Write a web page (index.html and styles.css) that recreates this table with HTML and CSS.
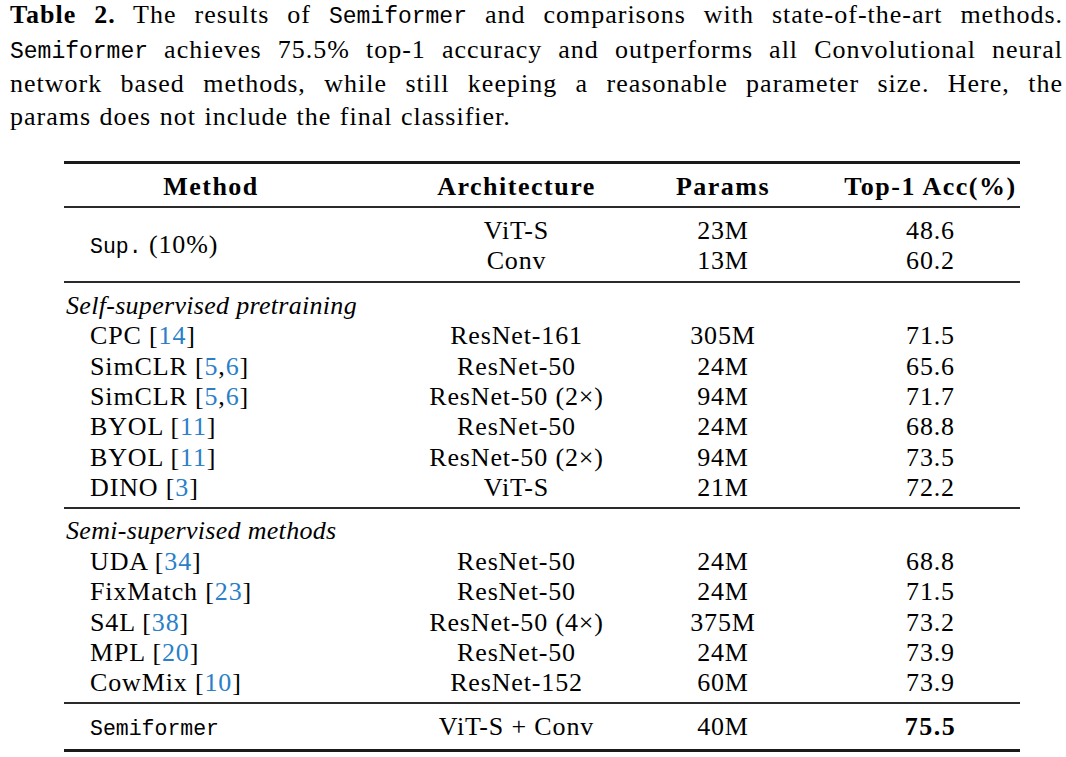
FILE: index.html
```html
<!DOCTYPE html>
<html>
<head>
<meta charset="utf-8">
<link rel="stylesheet" href="styles.css">
</head>
<body>
<div class="caption">
  <span class="cl"><b class="lbl">Table 2.</b> The results of <span class="tt">Semiformer</span> and comparisons with state-of-the-art methods.</span>
  <span class="cl"><span class="tt">Semiformer</span> achieves 75.5% top-1 accuracy and outperforms all Convolutional neural</span>
  <span class="cl">network based methods, while still keeping a reasonable parameter size. Here, the</span>
  <span class="cl last">params does not include the final classifier.</span>
</div>

<div class="tbl">
  <div class="rule thick"></div>
  <div class="grid head">
    <div class="c1">Method</div>
    <div class="c2">Architecture</div>
    <div class="c3">Params</div>
    <div class="c4">Top-1 Acc(%)</div>
  </div>
  <div class="rule"></div>
  <div class="grid g-sup">
    <div class="c1 m span2"><span class="tt2">Sup.</span> (10%)</div>
    <div class="c2">ViT-S</div><div class="c3">23M</div><div class="c4">48.6</div>
    <div class="c2">Conv</div><div class="c3">13M</div><div class="c4">60.2</div>
  </div>
  <div class="rule"></div>
  <div class="grid g-self">
    <div class="sec">Self-supervised pretraining</div>
    <div class="c1 m">CPC <span class="ref">[<a>14</a>]</span></div><div class="c2">ResNet-161</div><div class="c3">305M</div><div class="c4">71.5</div>
    <div class="c1 m">SimCLR <span class="ref">[<a>5</a>,<a>6</a>]</span></div><div class="c2">ResNet-50</div><div class="c3">24M</div><div class="c4">65.6</div>
    <div class="c1 m">SimCLR <span class="ref">[<a>5</a>,<a>6</a>]</span></div><div class="c2">ResNet-50 (2×)</div><div class="c3">94M</div><div class="c4">71.7</div>
    <div class="c1 m">BYOL <span class="ref">[<a>11</a>]</span></div><div class="c2">ResNet-50</div><div class="c3">24M</div><div class="c4">68.8</div>
    <div class="c1 m">BYOL <span class="ref">[<a>11</a>]</span></div><div class="c2">ResNet-50 (2×)</div><div class="c3">94M</div><div class="c4">73.5</div>
    <div class="c1 m">DINO <span class="ref">[<a>3</a>]</span></div><div class="c2">ViT-S</div><div class="c3">21M</div><div class="c4">72.2</div>
  </div>
  <div class="rule"></div>
  <div class="grid g-semi">
    <div class="sec">Semi-supervised methods</div>
    <div class="c1 m">UDA <span class="ref">[<a>34</a>]</span></div><div class="c2">ResNet-50</div><div class="c3">24M</div><div class="c4">68.8</div>
    <div class="c1 m">FixMatch <span class="ref">[<a>23</a>]</span></div><div class="c2">ResNet-50</div><div class="c3">24M</div><div class="c4">71.5</div>
    <div class="c1 m">S4L <span class="ref">[<a>38</a>]</span></div><div class="c2">ResNet-50 (4×)</div><div class="c3">375M</div><div class="c4">73.2</div>
    <div class="c1 m">MPL <span class="ref">[<a>20</a>]</span></div><div class="c2">ResNet-50</div><div class="c3">24M</div><div class="c4">73.9</div>
    <div class="c1 m">CowMix <span class="ref">[<a>10</a>]</span></div><div class="c2">ResNet-152</div><div class="c3">60M</div><div class="c4">73.9</div>
  </div>
  <div class="rule"></div>
  <div class="grid g-ours">
    <div class="c1 m"><span class="tt2">Semiformer</span></div>
    <div class="c2">ViT-S + Conv</div>
    <div class="c3">40M</div>
    <div class="c4 best">75.5</div>
  </div>
  <div class="rule thick"></div>
</div>
</body>
</html>
```

FILE: styles.css
```css
html, body {
  margin: 0;
  padding: 0;
  background: #fff;
  color: #000;
}
body {
  font-family: "Liberation Serif", "Times New Roman", serif;
}

.caption {
  margin: -1px 0 0 0;
  padding: 0 3px 0 10px;
  font-size: 26px;
  line-height: 32.7px;
}
.cl {
  display: block;
  text-align: justify;
  text-align-last: justify;
  letter-spacing: 1px;
  word-spacing: 1px;
}
.cl.last {
  text-align-last: left;
}
.lbl {
  font-weight: bold;
  letter-spacing: 1px;
}
.tt {
  font-family: "Liberation Mono", "DejaVu Sans Mono", monospace;
  font-size: 23px;
  letter-spacing: 0;
}

.tbl {
  margin: 27px 0 0 64px;
  width: 956px;
  font-size: 26px;
  letter-spacing: 0.85px;
}
.rule {
  height: 2px;
  background: #2a2a2a;
}
.rule.thick {
  height: 3px;
  background: #1a1a1a;
}
.grid {
  display: grid;
  grid-template-columns: 294px 317px 166px 179px;
  line-height: 30.4px;
}
.c1 { text-align: left; }
.c2, .c3, .c4 { text-align: center; }
.c3 { padding-right: 70px; }
.m { padding-left: 26px; }
.span2 {
  grid-row: span 2;
  align-self: center;
}
.sec {
  grid-column: 1 / -1;
  font-style: italic;
  padding-left: 2px;
  letter-spacing: 0.3px;
}
.head {
  font-weight: bold;
  letter-spacing: 1.5px;
  line-height: 30px;
  padding: 8px 0 4px 0;
}
.head .c1 { text-align: center; }
.g-sup { padding: 8px 0 4.2px 0; }
.g-self { padding: 8px 0 3.2px 0; }
.g-semi { padding: 7.5px 0 3.1px 0; }
.g-ours { padding: 8px 0 4.6px 0; }

.tt2 {
  font-family: "Liberation Mono", "DejaVu Sans Mono", monospace;
  font-size: 21.5px;
  letter-spacing: 0;
}
.ref a {
  color: #2a7fc8;
}
.best {
  font-weight: bold;
  letter-spacing: 1.5px;
}
```
